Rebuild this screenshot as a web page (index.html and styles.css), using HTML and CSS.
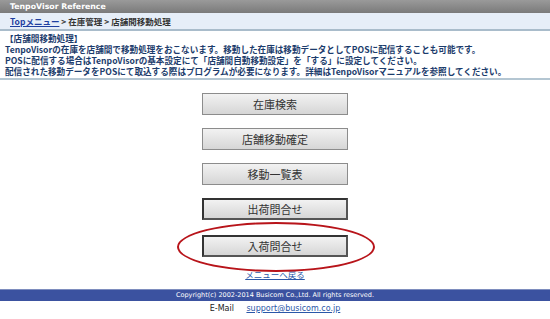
FILE: index.html
```html
<!DOCTYPE html>
<html lang="ja">
<head>
    <meta charset="UTF-8">
    <title>TenpoVisor Reference</title>
    <link rel="stylesheet" href="styles.css">
</head>
<body>
    <!-- Header -->
    <div class="title-bar">TenpoVisor Reference</div>
    <div class="crumbs">
        <a href="#">Topメニュー</a> &gt; 在庫管理 &gt; 店舗間移動処理
    </div>

    <!-- Description -->
    <div class="intro">
        <p>【店舗間移動処理】<br>
        TenpoVisorの在庫を店舗間で移動処理をおこないます。移動した在庫は移動データとしてPOSに配信することも可能です。<br>
        POSに配信する場合はTenpoVisorの基本設定にて「店舗間自動移動設定」を「する」に設定してください。<br>
        配信された移動データをPOSにて取込する際はプログラムが必要になります。詳細はTenpoVisorマニュアルを参照してください。</p>
    </div>

    <!-- Menu buttons -->
    <div class="menu">
        <button class="menu-button">在庫検索</button>
        <button class="menu-button">店舗移動確定</button>
        <button class="menu-button">移動一覧表</button>
        <button class="menu-button dark">出荷問合せ</button>
        <div class="circled">
            <button class="menu-button dark">入荷問合せ</button>
        </div>
        <a class="back-link" href="#">メニューへ戻る</a>
    </div>

    <!-- Footer -->
    <div class="copyright">Copyright(c) 2002-2014 Busicom Co.,Ltd. All rights reserved.</div>
    <div class="contact">E-Mail <a href="#">support@busicom.co.jp</a></div>
</body>
</html>
```

FILE: styles.css
```css
body {
    margin: 0;
    background: #fff;
    font-family: "Noto Sans CJK JP", "DejaVu Sans", sans-serif;
    color: #333;
}

a {
    color: #1f3f9f;
}

/* Header */
.title-bar {
    height: 13px;
    line-height: 13px;
    padding-left: 10px;
    background: linear-gradient(#9a9a9a, #7a7a7a);
    color: #fff;
    font-family: "DejaVu Sans", sans-serif;
    font-size: 7.8px;
    font-weight: bold;
}

.crumbs {
    height: 16px;
    line-height: 16px;
    padding-left: 10px;
    background: #e6eef8;
    border-bottom: 2px solid #a9bccb;
    font-size: 8.5px;
    font-weight: bold;
    color: #333;
}

.crumbs a {
    color: #1f3f9f;
}

.intro {
    padding: 2px 5px 1px;
    border-bottom: 2px solid #b4c6d2;
}

.intro p {
    margin: 0;
    font-size: 8.6px;
    line-height: 11px;
    font-weight: bold;
    color: #1c3c6c;
    white-space: nowrap;
}

/* Buttons */
.menu {
    display: flex;
    flex-direction: column;
    align-items: center;
    padding-top: 13px;
}

.menu-button {
    width: 146px;
    height: 22px;
    margin: 0 0 13px;
    border: 1px solid #8c8c8c;
    background: linear-gradient(#f2f2f2, #d6d6d6);
    font-family: "Noto Sans CJK JP", sans-serif;
    font-size: 11px;
    color: #333;
    padding: 0;
}

.menu-button.dark {
    border: 2px solid #333;
    border-right-color: #555;
    border-bottom-color: #555;
}

.circled {
    position: relative;
    margin-top: 2px;
}

.circled .menu-button {
    margin: 0;
    display: block;
}

.circled::before {
    content: "";
    position: absolute;
    left: -25px;
    top: -13px;
    width: 194px;
    height: 46px;
    border: 2px solid #b8141a;
    border-radius: 50%;
}

.back-link {
    margin-top: 11px;
    height: 12px;
    line-height: 12px;
    font-size: 8.5px;
    color: #2a57a8;
}

/* Footer */
.copyright {
    margin-top: 9px;
    height: 11px;
    line-height: 11px;
    background: #3b52a0;
    border-top: 1px solid #7e8dbe;
    text-align: center;
    color: #fff;
    font-family: "DejaVu Sans", sans-serif;
    font-size: 6.5px;
}

.contact {
    padding-top: 3px;
    text-align: center;
    font-family: "DejaVu Sans", sans-serif;
    font-size: 8px;
    color: #222;
}

.contact a {
    margin-left: 10px;
    color: #2a57a8;
}
```
